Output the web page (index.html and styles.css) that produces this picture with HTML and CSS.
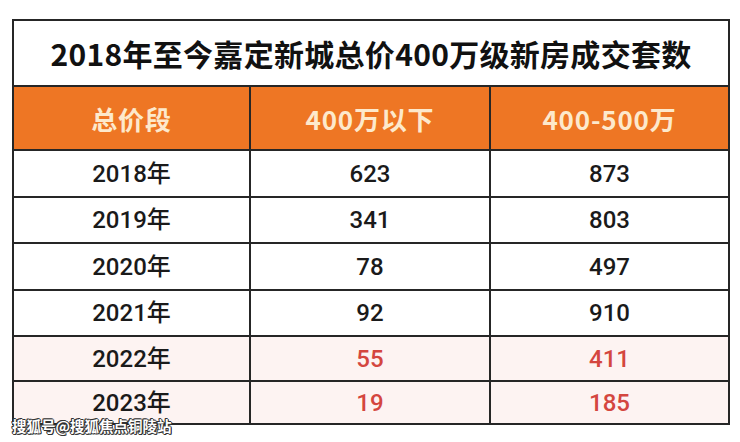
FILE: index.html
```html
<!DOCTYPE html>
<html lang="zh">
<head>
<meta charset="utf-8">
<link rel="stylesheet" href="styles.css">
</head>
<body>
<div class="page">
  <table class="data">
    <colgroup>
      <col class="c1"><col class="c2"><col class="c3">
    </colgroup>
    <tr class="title-row"><th colspan="3">2018年至今嘉定新城总价400万级新房成交套数</th></tr>
    <tr class="head-row"><th>总价段</th><th>400万以下</th><th>400-500万</th></tr>
    <tr class="r1"><td>2018年</td><td>623</td><td>873</td></tr>
    <tr class="r2"><td>2019年</td><td>341</td><td>803</td></tr>
    <tr class="r3"><td>2020年</td><td>78</td><td>497</td></tr>
    <tr class="r4"><td>2021年</td><td>92</td><td>910</td></tr>
    <tr class="r5 hl"><td>2022年</td><td class="red">55</td><td class="red">411</td></tr>
    <tr class="r6 hl"><td>2023年</td><td class="red">19</td><td class="red">185</td></tr>
  </table>
  <div class="watermark">搜狐号@搜狐焦点铜陵站</div>
</div>
</body>
</html>
```

FILE: styles.css
```css
html, body {
  margin: 0;
  padding: 0;
  background: #ffffff;
}
.page {
  position: relative;
  width: 740px;
  height: 442px;
  padding: 19px 0 0 12px;
  box-sizing: border-box;
}
.data {
  border-collapse: collapse;
  table-layout: fixed;
  width: 716px;
  font-family: Roboto, "Noto Sans CJK SC", sans-serif;
}
.c1 { width: 237px; }
.c2 { width: 240px; }
.c3 { width: 239px; }
.data th, .data td {
  border: 2px solid #262626;
  text-align: center;
  padding: 0;
}
.title-row th {
  height: 64px;
  font-family: "Noto Sans CJK SC", sans-serif;
  font-weight: 700;
  font-size: 30px;
  color: #111111;
  background: #ffffff;
  letter-spacing: 0.3px;
}
.head-row th {
  height: 62px;
  background: #ee7624;
  color: #fde9cc;
  font-family: "Noto Sans CJK SC", sans-serif;
  font-weight: 700;
  font-size: 26px;
  letter-spacing: 0.8px;
}
.data td {
  font-size: 24px;
  font-weight: 500;
  line-height: 26px;
  color: #1a1a1a;
  background: #ffffff;
}
.r1 td { height: 45px; }
.r2 td { height: 44px; }
.r3 td { height: 45px; }
.r4 td { height: 44px; }
.r5 td { height: 43px; }
.r6 td { height: 41px; }
.data .hl td { background: #fdf3f2; }
.data td.red { color: #d4463f; }
.watermark {
  position: absolute;
  left: 12px;
  top: 418px;
  font-family: "Noto Sans CJK SC", sans-serif;
  font-size: 14.5px;
  font-weight: 700;
  line-height: 16px;
  color: #ffffff;
  text-shadow: -1px 0 #333, 1px 0 #333, 0 -1px #333, 0 1px #333, 1px 1px #333, -1px -1px #333;
}
```
